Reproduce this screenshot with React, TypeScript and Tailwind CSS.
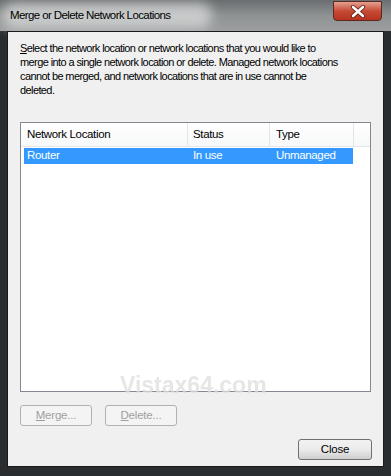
import React from "react";

export default function App() {
  const font = { fontFamily: '"Liberation Sans", Arial, sans-serif' };
  return (
    <div
      className="relative w-[391px] h-[476px] overflow-hidden bg-[#2a2d2f] flex flex-col"
      style={font}
    >
      {/* Title bar */}
      <div className="relative h-[31px] shrink-0 bg-gradient-to-b from-[#6b6e70] via-[#8f9293] to-[#9c9e9f] flex items-center">
        <div className="absolute left-[2px] top-[3px] w-[210px] h-[26px] rounded-full bg-[#d6d8d8] blur-[6px] opacity-80" />
        <span className="relative ml-[10px] mt-[1px] text-[11.5px] tracking-[-0.6px] text-black whitespace-nowrap">Merge or Delete Network Locations</span>
        <div className="absolute right-[9px] top-[1px] w-[49px] h-[20px] rounded-b-[4px] border border-[#5a2a22] bg-gradient-to-b from-[#e5a090] via-[#c44a35] to-[#b8321e] flex items-center justify-center">
          <svg width="16" height="13" viewBox="0 0 16 13">
            <path d="M3 2 L13 11 M13 2 L3 11" stroke="#5a1a10" strokeWidth="4.2" strokeLinecap="round" />
            <path d="M3 2 L13 11 M13 2 L3 11" stroke="#ffffff" strokeWidth="2.6" strokeLinecap="round" />
          </svg>
        </div>
      </div>
      {/* Client area */}
      <div className="mx-[7px] h-[436px] border border-[#1a1a1a] bg-[#f0f0f0] flex flex-col px-[12px] relative">
        <p className="mt-[9px] text-[11px] tracking-[-0.6px] leading-[14px] text-black whitespace-nowrap">
          <span className="underline">S</span>elect the network location or network locations that you would like to
          <br />
          merge into a single network location or delete. Managed network locations
          <br />
          cannot be merged, and network locations that are in use cannot be
          <br />
          deleted.
        </p>
        <div className="mt-[25px] h-[270px] border border-[#828790] bg-white flex flex-col">
          <div className="h-[24px] flex text-[11.5px] tracking-[-0.35px] text-black bg-gradient-to-b from-white to-[#f7f8f9] border-b border-[#e5e5e5]">
            <div className="w-[167px] pl-[6px] flex items-center border-r border-[#e5e5e5]">Network Location</div>
            <div className="w-[82px] pl-[5px] flex items-center border-r border-[#e5e5e5]">Status</div>
            <div className="w-[84px] pl-[6px] flex items-center border-r border-[#e5e5e5]">Type</div>
          </div>
          <div className="ml-[3px] mt-[1px] w-[329px] h-[16px] bg-[#3399ff] flex text-[11.5px] tracking-[-0.35px] text-white items-center">
            <div className="w-[166px] pl-[3px]">Router</div>
            <div className="w-[83px] pl-[3px]">In use</div>
            <div className="pl-[3px]">Unmanaged</div>
          </div>
        </div>
        <div className="mt-[13px] flex gap-[13px]">
          <div className="w-[72px] h-[21px] rounded-[3px] border border-[#adb2b5] bg-[#f4f4f4] flex items-center justify-center text-[11.5px] tracking-[-0.2px] text-[#a0a0a0]">
            <span><span className="underline">M</span>erge...</span>
          </div>
          <div className="w-[72px] h-[21px] rounded-[3px] border border-[#adb2b5] bg-[#f4f4f4] flex items-center justify-center text-[11.5px] tracking-[-0.2px] text-[#a0a0a0]">
            <span><span className="underline">D</span>elete...</span>
          </div>
        </div>
        <div className="mt-[13px] flex justify-end -mr-[1px]">
          <div className="w-[74px] h-[21px] rounded-[3px] border border-[#707070] bg-gradient-to-b from-[#f2f2f2] via-[#ebebeb] to-[#cfcfcf] flex items-center justify-center text-[11.5px] tracking-[-0.2px] text-black">
            Close
          </div>
        </div>
        <div className="absolute left-[112px] top-[336px] text-[23px] font-bold text-[#dedede] opacity-75 pointer-events-none" style={font}>
          Vistax64.com
        </div>
      </div>
    </div>
  );
}
